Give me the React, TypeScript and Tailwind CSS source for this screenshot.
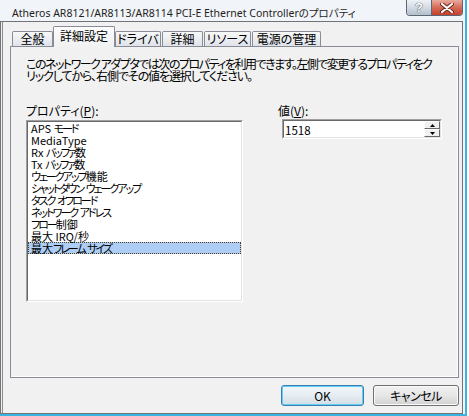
const K = ({ children }: { children: React.ReactNode }) => (
  <span className="tracking-[-2px]">{children}</span>
);

const items = [
  <>APS <K>モード</K></>,
  <>MediaType</>,
  <>Rx <K>バッファ</K>数</>,
  <>Tx <K>バッファ</K>数</>,
  <><K>ウェークアップ</K>機能</>,
  <><K>シャットダウン</K> <K>ウェークアップ</K></>,
  <><K>タスク</K> <K>オフロード</K></>,
  <><K>ネットワーク</K> <K>アドレス</K></>,
  <><K>フロー</K>制御</>,
  <>最大 IRQ/秒</>,
  <>最大<K>フレーム</K> <K>サイズ</K></>,
];

const tabs = [
  { label: "全般", width: "w-[41px]" },
  { label: "詳細設定", width: "w-[62px]", active: true },
  { label: "ドライバ", width: "w-[46px]" },
  { label: "詳細", width: "w-[41px] ml-[1px]" },
  { label: "リソース", width: "w-[47px] ml-[1px]" },
  { label: "電源の管理", width: "w-[69px] ml-[1px]" },
];

const Tab = ({ label, width, active }: { label: string; width: string; active?: boolean }) =>
  active ? (
    <div
      className={`${width} relative z-10 mb-[-1px] h-[21px] rounded-t-[2px] border border-b-0 border-[#898c95] bg-gradient-to-b from-[#fdfdfd] via-[#f5f6f8] to-[#f1f1f1] flex justify-center pt-[3px] leading-[12px]`}
    >
      {label}
    </div>
  ) : (
    <div
      className={`${width} h-[15px] rounded-t-[2px] border border-b-0 border-[#898c95] bg-gradient-to-b from-[#f8f8f8] to-[#dfe3ea] flex justify-center pt-[1px] leading-[12px]`}
    >
      {label}
    </div>
  );

const Sunken = ({ className, children }: { className: string; children?: React.ReactNode }) => (
  <div className={`${className} border border-t-[#a0a0a0] border-l-[#a0a0a0] border-r-white border-b-white`}>
    <div className="h-full w-full border border-t-[#696969] border-l-[#696969] border-r-[#e3e3e3] border-b-[#e3e3e3] bg-white">
      {children}
    </div>
  </div>
);

const SpinButton = ({ up }: { up?: boolean }) => (
  <div className="h-[8px] w-[16px] border border-t-white border-l-white border-r-[#696969] border-b-[#696969] bg-[#f0f0f0] flex items-center justify-center">
    <svg width="5" height="3" viewBox="0 0 5 3">
      <path d={up ? "M0 3 L2.5 0 L5 3 Z" : "M0 0 L2.5 3 L5 0 Z"} fill="#000" />
    </svg>
  </div>
);

export default function App() {
  return (
    <div className="w-[469px] h-[416px] overflow-hidden bg-white text-[12px] text-black font-['Noto_Sans_CJK_JP',sans-serif] [font-feature-settings:'palt']">
      <div className="w-[467px] h-[416px] flex flex-col bg-[#f1f4f8] border-r-2 border-b-2 border-[#3ab3e0]">
        {/* title bar */}
        <div className="h-[21px] flex items-start">
          <span className="pl-[12px] pt-[5px] leading-[16px] text-[10.5px] font-['Noto_Sans','Noto_Sans_CJK_JP',sans-serif] text-[#1e1e1e] whitespace-nowrap">
            Atheros AR8121/AR8113/AR8114 PCI-E Ethernet Controllerのプロパティ
          </span>
          <div className="ml-auto mr-[2px] flex h-[16px] rounded-b-[4px] border border-t-0 border-[#5b6676] overflow-hidden">
            <div className="w-[25px] bg-gradient-to-b from-[#eef2f6] via-[#d4dbe4] to-[#b3bfcc] flex items-center justify-center border-r border-[#5b6676]">
              <span className="text-[13px] leading-[13px] font-bold text-white font-['Liberation_Sans',sans-serif] [text-shadow:0_0_1px_#3a4450,0_0_1px_#3a4450]">
                ?
              </span>
            </div>
            <div className="w-[30px] bg-gradient-to-b from-[#e9aa9e] via-[#d56b58] to-[#c2402a] flex items-center justify-center">
              <svg width="14" height="10" viewBox="0 0 14 10">
                <path d="M2 1 L12 9 M12 1 L2 9" stroke="#6e2418" strokeWidth="4" strokeLinecap="round" />
                <path d="M2 1 L12 9 M12 1 L2 9" stroke="#fff" strokeWidth="2.2" strokeLinecap="round" />
              </svg>
            </div>
          </div>
        </div>

        {/* client area */}
        <div className="w-[463px] h-[393px] border border-[#707478] bg-[#f1f1f1] shadow-[inset_1px_0_0_#f1f1f1,inset_2px_0_0_#8a8d92] flex flex-col">
          <div className="ml-[9px] mt-[4px] flex items-end h-[20px] pl-[2px]">
            {tabs.map((t) => (
              <Tab key={t.label} {...t} />
            ))}
          </div>

          <div className="ml-[9px] w-[449px] h-[332px] border border-[#898c95] bg-[#f1f1f1] shadow-[inset_-1px_-1px_0_#ffffff] pl-[15px] pt-[11px] leading-[12px]">
            <p className="whitespace-nowrap">
              <span className="tracking-[-1.5px]">
                このネットワーク アダプタでは次のプロパティを利用できます。左側で変更するプロパティをク
              </span>
              <br />
              <span className="tracking-[-1.1px]">リックしてから、右側でその値を選択してください。</span>
            </p>

            <div className="mt-[23px] flex">
              <div className="w-[217px]">
                <div>
                  プロパティ(<span className="underline">P</span>):
                </div>
                <Sunken className="mt-[3px] w-[217px] h-[182px]">
                  <ul className="text-[11px]">
                    {items.map((it, i) =>
                      i === items.length - 1 ? (
                        <li
                          key={i}
                          className="h-[12px] leading-[10px] pl-[2px] bg-[#adcdf5] border border-dotted border-[#4a3a20] whitespace-nowrap"
                        >
                          {it}
                        </li>
                      ) : (
                        <li key={i} className="h-[12px] leading-[12px] pl-[3px] whitespace-nowrap">
                          {it}
                        </li>
                      )
                    )}
                  </ul>
                </Sunken>
              </div>

              <div className="ml-[35px]">
                <div>
                  値(<span className="underline">V</span>):
                </div>
                <Sunken className="mt-[2px] ml-[4px] w-[160px] h-[20px]">
                  <div className="flex h-full">
                    <span className="pl-[1px] pt-[3px] flex-1 text-[11.5px]">1518</span>
                    <div className="flex flex-col">
                      <SpinButton up />
                      <SpinButton />
                    </div>
                  </div>
                </Sunken>
              </div>
            </div>
          </div>

          <div className="mt-[7px] flex justify-end pr-[3px]">
            <button className="w-[83px] h-[21px] mr-[9px] rounded-[3px] border border-[#3c7fb1] bg-gradient-to-b from-[#f2f6f9] via-[#e6edf2] to-[#d3dde5] shadow-[inset_0_0_0_1px_#5fd0f4] leading-[12px]">
              OK
            </button>
            <button className="w-[86px] h-[21px] rounded-[3px] border border-[#707070] bg-gradient-to-b from-[#f2f2f2] via-[#e6e6e6] to-[#d2d2d2] shadow-[inset_0_0_0_1px_#fbfbfb] leading-[12px] tracking-[-0.5px]">
              キャンセル
            </button>
          </div>
        </div>
      </div>
    </div>
  );
}
